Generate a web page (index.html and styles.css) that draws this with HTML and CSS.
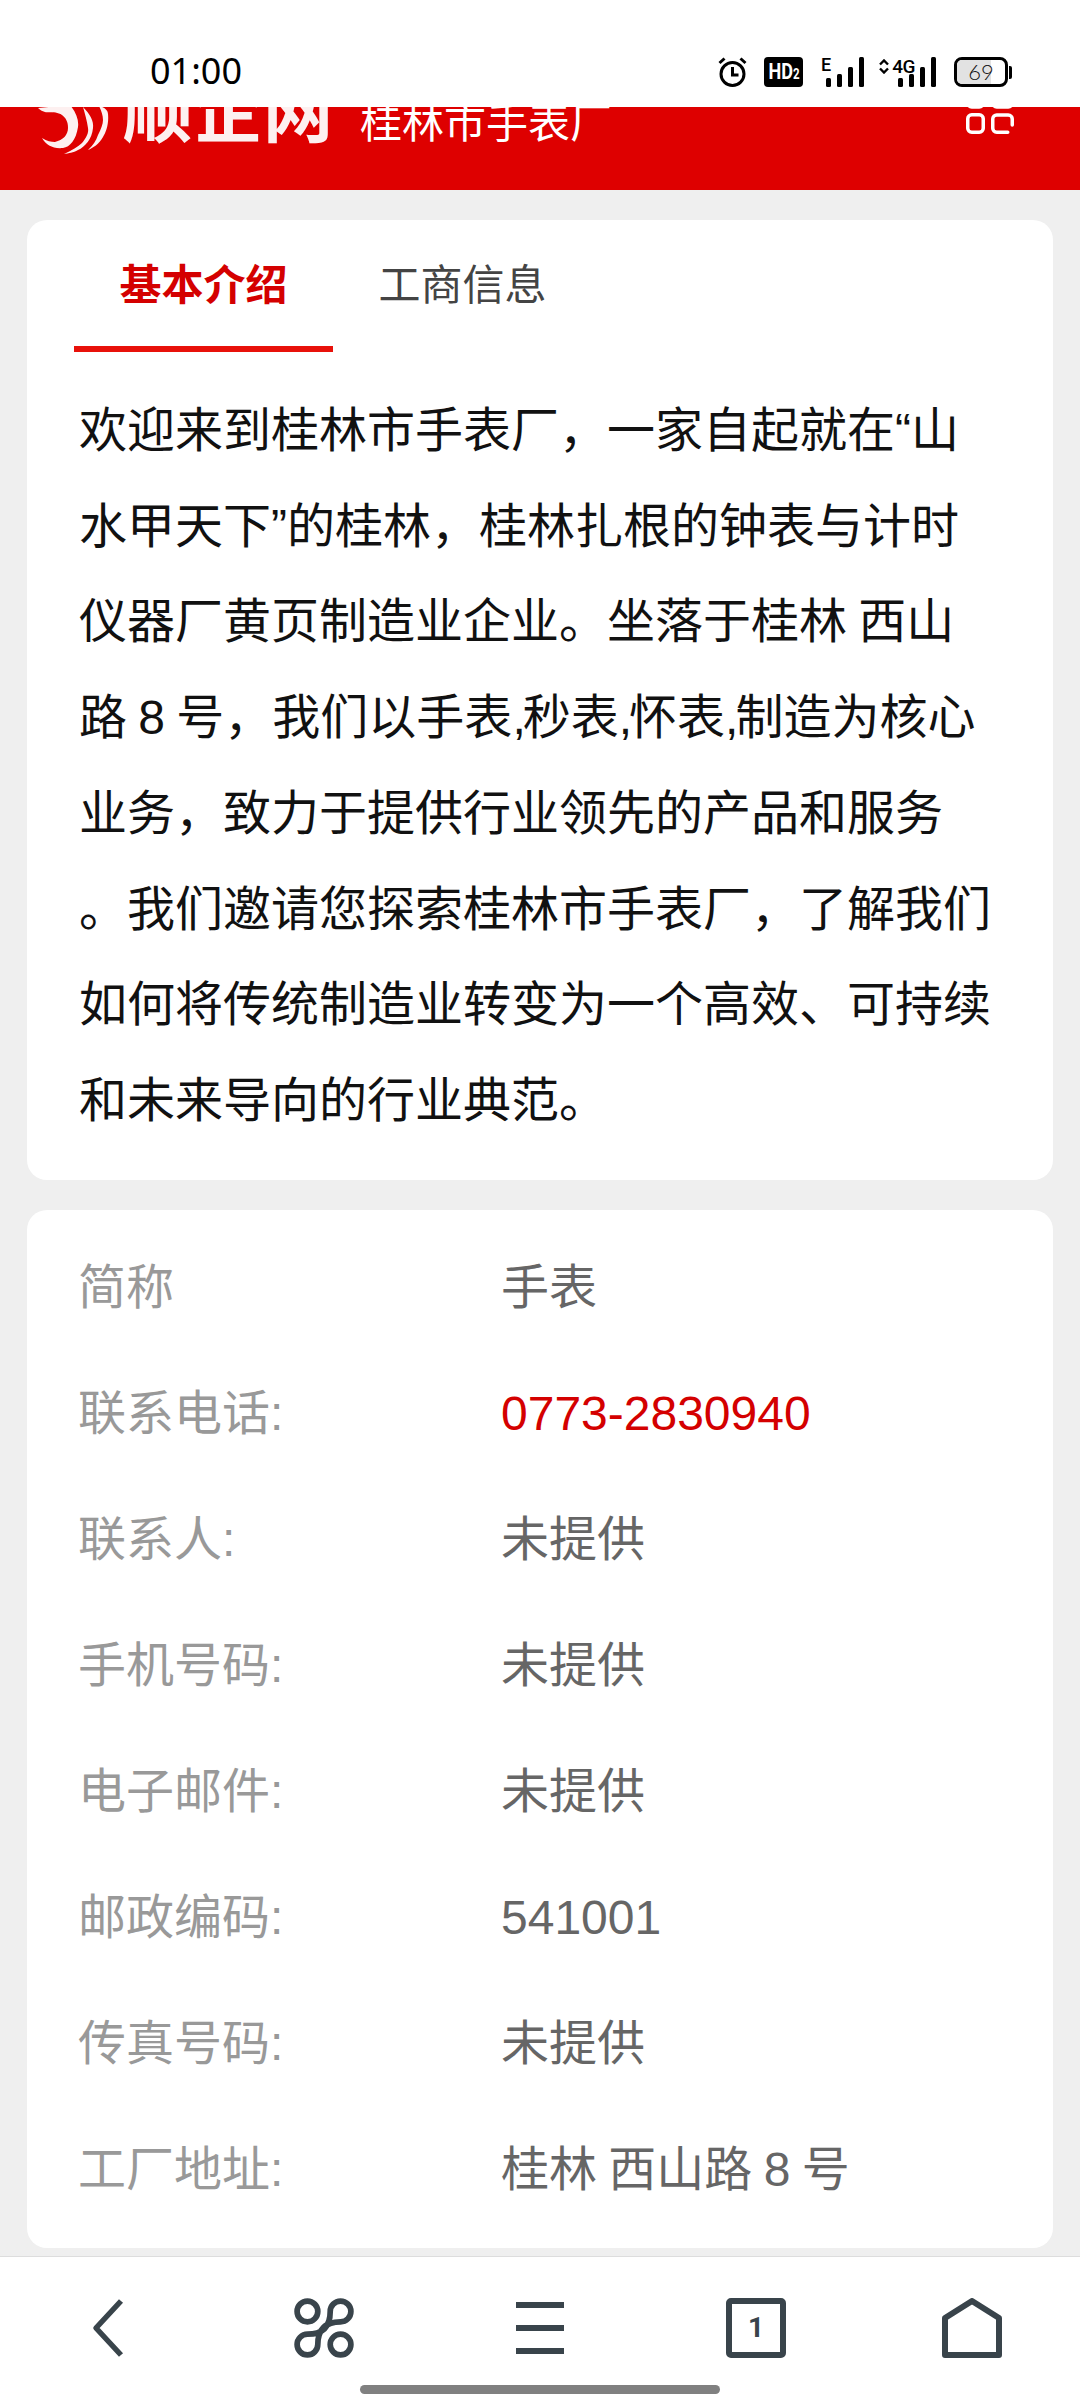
FILE: index.html
```html
<!DOCTYPE html>
<html lang="zh-CN">
<head>
    <meta charset="UTF-8">
    <meta name="viewport" content="width=device-width, initial-scale=1.0">
    <title>桂林市手表厂</title>
    <link rel="stylesheet" href="styles.css">
</head>
<body>
    <div class="status-bar">
        <span class="time">01:00</span>
        <div class="status-icons">
            <svg class="ic-alarm" width="29" height="30" viewBox="0 0 29 30">
                <circle cx="14.500" cy="17" r="11.500" fill="none" stroke="#000" stroke-width="3"/>
                <path d="M14.500 10v8h6" fill="none" stroke="#000" stroke-width="3"/>
                <path d="M1.500 6l5-4.500M27.500 6l-5-4.500" fill="none" stroke="#000" stroke-width="3"/>
            </svg>
            <span class="hd-badge"><span>HD<small>2</small></span></span>
            <div class="signal">
                <span class="net-label">E</span>
                <svg width="38" height="30" viewBox="0 0 38 30">
                    <rect x="0" y="21" width="5" height="9" rx="1.500"/>
                    <rect x="11" y="17" width="5" height="13" rx="1.500"/>
                    <rect x="22" y="10" width="5" height="20" rx="1.500"/>
                    <rect x="33" y="0" width="5" height="30" rx="1.500"/>
                </svg>
            </div>
            <div class="signal signal-4g">
                <svg class="arrows" width="10" height="15" viewBox="0 0 10 15">
                    <path d="M1 5.500l4-4 4 4M1 9.500l4 4 4-4" fill="none" stroke="#000" stroke-width="2.400"/>
                </svg>
                <span class="net-label">4G</span>
                <svg width="38" height="30" viewBox="0 0 38 30">
                    <rect x="0" y="21" width="5" height="9" rx="1.500"/>
                    <rect x="11" y="17" width="5" height="13" rx="1.500"/>
                    <rect x="22" y="10" width="5" height="20" rx="1.500"/>
                    <rect x="33" y="0" width="5" height="30" rx="1.500"/>
                </svg>
            </div>
            <div class="battery">
                <div class="battery-body">
                    <div class="battery-fill"></div>
                    <span>69</span>
                </div>
                <div class="battery-cap"></div>
            </div>
        </div>
    </div>

    <div class="site-header">
        <svg class="logo-mark" width="72" height="60" viewBox="0 0 72 60">
            <path d="M0 14L32 11C38 18 41 26 40 33 38 46 32 53 25 54 15 55 8 51 4 44 9 47 13 48 17 48 25 46 30 41 30 34 30 28 28 24 24 21 18 17 10 19 7 18 4 17 2 16 0 14z" fill="#fdf0f0"/>
            <path d="M45 13C52 20 56 27 55 34 54 45 47 53 40 56 35 59 31 59 26 60 34 56 40 53 44 49 48 44 51 39 50 34 49 27 47 20 45 13z" fill="#fdf0f0"/>
            <path d="M61 12C66 13 70 16 70 20 71 30 68 38 65 43 61 50 55 54 50 56 55 51 58 47 60 41 63 35 65 30 65 26 65 21 63 16 61 12z" fill="#fdf0f0"/>
        </svg>
        <span class="logo-text">顺企网</span>
        <span class="site-title">桂林市手表厂</span>
        <svg class="header-menu" width="52" height="50" viewBox="0 0 52 50">
            <g fill="none" stroke="#fff" stroke-width="3.500" stroke-linecap="round">
                <rect x="3.750" y="-3" width="15.500" height="20" rx="4"/>
                <rect x="28.750" y="-3" width="19.500" height="20" rx="4"/>
                <rect x="3.750" y="24.750" width="15.500" height="17.500" rx="4"/>
                <path d="M48.250 35V29a4 4 0 0 0-4-4H33a4 4 0 0 0-4.250 4v9.250a4 4 0 0 0 4 4h11"/>
            </g>
        </svg>
    </div>

    <div class="content">
        <div class="card intro-card">
            <div class="tabs">
                <div class="tab active">基本介绍</div>
                <div class="tab">工商信息</div>
            </div>
            <p class="intro">欢迎来到桂林市手表厂，一家自起就在“山<br>水甲天下”的桂林，桂林扎根的钟表与计时<br>仪器厂黄页制造业企业。坐落于桂林 西山<br>路 8 号，我们以手表<span class="comma">,</span>秒表<span class="comma">,</span>怀表<span class="comma">,</span>制造为核心<br>业务，致力于提供行业领先的产品和服务<br>。我们邀请您探索桂林市手表厂，了解我们<br>如何将传统制造业转变为一个高效、可持续<br>和未来导向的行业典范。</p>
        </div>

        <div class="card info-card">
            <div class="info-row"><span class="info-label">简称</span><span class="info-value">手表</span></div>
            <div class="info-row"><span class="info-label">联系电话:</span><span class="info-value phone">0773-2830940</span></div>
            <div class="info-row"><span class="info-label">联系人:</span><span class="info-value">未提供</span></div>
            <div class="info-row"><span class="info-label">手机号码:</span><span class="info-value">未提供</span></div>
            <div class="info-row"><span class="info-label">电子邮件:</span><span class="info-value">未提供</span></div>
            <div class="info-row"><span class="info-label">邮政编码:</span><span class="info-value">541001</span></div>
            <div class="info-row"><span class="info-label">传真号码:</span><span class="info-value">未提供</span></div>
            <div class="info-row"><span class="info-label">工厂地址:</span><span class="info-value">桂林 西山路 8 号</span></div>
        </div>
    </div>

    <div class="bottom-nav">
        <div class="nav-icons">
            <svg width="32" height="60" viewBox="0 0 32 60">
                <path d="M29 3L4 30l25 27" fill="none" stroke="#39444b" stroke-width="5.500" stroke-linejoin="round"/>
            </svg>
            <svg width="60" height="60" viewBox="0 0 58 58">
                <g fill="none" stroke="#39444b" stroke-width="5.500">
                    <circle cx="13" cy="13" r="10"/>
                    <circle cx="45" cy="45" r="10"/>
                    <path d="M35 13A10 10 0 1 1 45 23Q23 23 23 45A10 10 0 1 1 13 35Q35 35 35 13z"/>
                </g>
            </svg>
            <svg width="50" height="54" viewBox="0 0 50 54">
                <path d="M1 4h48M1 27h48M1 50h48" stroke="#39444b" stroke-width="6"/>
            </svg>
            <div class="tab-count">1</div>
            <svg width="60" height="60" viewBox="0 0 60 60">
                <path d="M30 3L3 20v37h54V20z" fill="none" stroke="#39444b" stroke-width="6" stroke-linejoin="round"/>
            </svg>
        </div>
        <div class="home-bar"></div>
    </div>
</body>
</html>
```

FILE: styles.css
```css
html, body {
    margin: 0;
    padding: 0;
}
body {
    width: 1080px;
    height: 2400px;
    overflow: hidden;
    display: flex;
    flex-direction: column;
    background: #efefef;
    font-family: "Liberation Sans", "Noto Sans CJK SC", sans-serif;
}
.status-bar {
    height: 107px;
    flex: none;
    background: #fff;
    display: flex;
    align-items: flex-start;
    justify-content: space-between;
    padding: 47px 68px 0 150px;
    box-sizing: border-box;
    position: relative;
    z-index: 1;
}
.time {
    font-family: "Noto Sans", sans-serif;
    font-size: 36px;
    line-height: 50px;
    margin-top: -1px;
    color: #000;
}
.status-icons {
    display: flex;
    align-items: flex-start;
    margin-top: 10px;
}
.ic-alarm {
    margin-right: 17px;
}
.hd-badge {
    width: 39px;
    height: 30px;
    background: #000;
    border-radius: 4px;
    color: #fff;
    font-family: "Roboto", sans-serif;
    font-size: 22px;
    font-weight: 700;
    line-height: 30px;
    text-align: center;
    margin-right: 18px;
    white-space: nowrap;
}
.hd-badge span {
    display: inline-block;
    transform: scaleX(0.82);
    margin: 0 -4px;
}
.hd-badge small {
    font-size: 14px;
}
.signal {
    display: flex;
    align-items: flex-start;
    margin-right: 15px;
}
.net-label {
    font-size: 18px;
    line-height: 15px;
    color: #000;
    font-family: "Roboto", sans-serif;
    font-weight: 500;
    flex: none;
}
.signal svg {
    fill: #000;
    flex: none;
}
.signal > .net-label {
    margin-right: -5px;
}
.signal-4g {
    margin-right: 18px;
}
.signal-4g .arrows {
    fill: none;
    margin: 2px 3px 0 0;
}
.signal-4g > .net-label {
    font-size: 19px;
    line-height: 20px;
    letter-spacing: -0.5px;
    margin-right: -17px;
}
.battery {
    display: flex;
    align-items: center;
}
.battery-body {
    width: 54px;
    height: 30px;
    border: 3px solid #000;
    border-radius: 8px;
    box-sizing: border-box;
    position: relative;
    overflow: hidden;
    text-align: center;
    font-family: "Lato", sans-serif;
    font-size: 22px;
    line-height: 24px;
    font-weight: 300;
    color: #111;
}
.battery-fill {
    width: 70%;
    height: 100%;
    background: #e2e2e2;
    position: absolute;
    left: 0;
    top: 0;
}
.battery-body span {
    position: relative;
}
.battery-cap {
    width: 3px;
    height: 13px;
    background: #000;
    margin-left: 1px;
    border-radius: 0 2px 2px 0;
}
.site-header {
    height: 83px;
    flex: none;
    background: #de0000;
    position: relative;
    overflow: hidden;
    display: flex;
    align-items: flex-end;
}
.logo-mark {
    margin: 0 0 36px 38px;
    flex: none;
}
.logo-text {
    font-size: 70px;
    line-height: 70px;
    font-weight: 700;
    color: #fdf0f0;
    margin: 0 0 42px 13px;
    flex: none;
    white-space: nowrap;
}
.site-title {
    font-size: 42px;
    line-height: 48px;
    color: #fff;
    margin: 0 0 42px 27px;
    white-space: nowrap;
}
.header-menu {
    position: absolute;
    right: 64px;
    top: -17px;
}
.content {
    flex: 1;
    padding: 30px 27px 0;
    overflow: hidden;
    min-height: 0;
}
.card {
    background: #fff;
    border-radius: 20px;
    margin-bottom: 30px;
}
.intro-card {
    height: 960px;
    box-sizing: border-box;
}
.tabs {
    display: flex;
    padding-left: 47px;
}
.tab {
    width: 259px;
    height: 132px;
    box-sizing: border-box;
    font-size: 42px;
    line-height: 132px;
    text-align: center;
    color: #444;
}
.tab.active {
    color: #d40000;
    font-weight: 700;
    border-bottom: 6px solid #e8110a;
}
.intro {
    margin: 31px 0 0 52px;
    font-size: 48px;
    line-height: 95.700px;
    color: #111;
    white-space: nowrap;
    word-spacing: -2px;
}
.comma {
    letter-spacing: -3px;
}
.info-card {
    height: 1038px;
    box-sizing: border-box;
    padding-top: 15px;
}
.info-row {
    height: 126px;
    display: grid;
    grid-template-columns: 423px 1fr;
    padding-left: 51px;
    font-size: 48px;
    line-height: 126px;
}
.info-label {
    color: #999;
}
.info-value {
    color: #666;
    word-spacing: -2px;
}
.info-value.phone {
    color: #d40000;
}
.bottom-nav {
    height: 144px;
    flex: none;
    background: #fff;
    border-top: 1px solid #ddd;
    box-sizing: border-box;
    position: relative;
}
.nav-icons {
    display: grid;
    grid-template-columns: repeat(5, 216px);
    justify-items: center;
    align-items: center;
    padding-top: 41px;
}
.tab-count {
    width: 60px;
    height: 60px;
    border: 6px solid #39444b;
    border-radius: 5px;
    box-sizing: border-box;
    text-align: center;
    font-family: "Roboto", sans-serif;
    font-size: 28px;
    line-height: 48px;
    font-weight: 700;
    color: #39444b;
}
.home-bar {
    width: 360px;
    height: 9px;
    background: #808080;
    border-radius: 5px;
    position: absolute;
    left: 360px;
    bottom: 6px;
}
```
